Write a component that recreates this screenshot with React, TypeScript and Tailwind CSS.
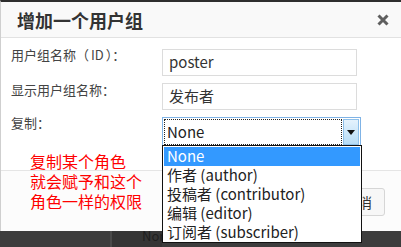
import React from "react";

const cjk = { fontFamily: '"Noto Sans CJK SC", "Noto Sans", sans-serif' };

export default function App() {
  return (
    <div className="relative w-[401px] h-[247px] overflow-hidden bg-[#3d3d3d]" style={cjk}>
      <div className="flex flex-col h-[231px] bg-white border-t-2 border-[#2e2e2e] border-l border-l-[#cfcfcf]">
        <div className="flex items-center justify-between h-[36px] bg-[#f9f9f9] border-b border-[#e2e2e2] pl-[16px] pr-[10px]">
          <span className="text-[18px] font-bold text-[#333] leading-none">增加一个用户组</span>
          <svg width="14" height="14" viewBox="0 0 14 14" className="mr-[1px]">
            <path d="M2.5 2.5 L11.5 11.5 M11.5 2.5 L2.5 11.5" stroke="#5f5f5f" strokeWidth="3" strokeLinecap="butt" />
          </svg>
        </div>
        <div className="flex flex-col gap-[7px] pt-[11px] pl-[10px] h-[132px]">
          <div className="grid grid-cols-[151px_195px] items-start">
            <span className="text-[13px] leading-[14px] text-[#444] -mt-[1px]">
              用户组名称（<span className="px-[2px]">ID</span>）：
            </span>
            <div className="h-[27px] border border-[#dcdcdc] flex items-center pl-[6px] text-[15px] text-[#333]">poster</div>
          </div>
          <div className="grid grid-cols-[151px_195px] items-start">
            <span className="text-[13px] leading-[14px] text-[#444] pt-[0px]">显示用户组名称：</span>
            <div className="h-[27px] border border-[#dcdcdc] flex items-center pl-[6px] text-[15px] text-[#333]">发布者</div>
          </div>
          <div className="grid grid-cols-[151px_199px] items-start">
            <span className="text-[13px] leading-[14px] text-[#444] -mt-[1px]">复制：</span>
            <div className="h-[30px] border border-[#7fb3e6] flex p-[1px] gap-[1px] bg-white">
              <div className="flex-1 border border-dotted border-[#222] flex items-center pl-[2px] text-[15px] text-[#222]">None</div>
              <div className="w-[16px] bg-gradient-to-b from-[#e4f2fd] to-[#b6dcf6] border border-[#8ec0ea] flex items-center justify-center">
                <svg width="8" height="5" viewBox="0 0 8 5"><path d="M0 0 L8 0 L4 5 Z" fill="#111" /></svg>
              </div>
            </div>
          </div>
        </div>
        <div className="flex-1 border-t border-[#e5e5e5] bg-[#fcfcfc] flex justify-end items-start pt-[17px] pr-[16px]">
          <div className="h-[28px] px-[12px] border border-[#d6d6d6] rounded-[3px] bg-[#f7f7f7] flex items-center text-[14px] text-[#333]">取消</div>
        </div>
      </div>
      <div className="absolute left-[110px] top-[231px] w-[52px] h-[16px] bg-[#353535] border-l-2 border-[#4a4a4a] pl-[30px] overflow-hidden whitespace-nowrap text-[13px] text-[#1e1e1e] leading-[10px]">Non</div>

      <div className="absolute left-[30px] top-[151px] flex flex-col text-[16px] leading-[20px] text-[#ff0000]">
        <span className="h-[20px]">复制某个角色</span>
        <span className="h-[20px]">就会赋予和这个</span>
        <span className="h-[20px]">角色一样的权限</span>
      </div>

      <div className="absolute left-[162px] top-[145px] w-[200px] h-[98px] bg-white border border-[#111] pt-[1px] px-[1px] text-[15px] text-[#222]">
        <div className="h-[19px] bg-[#3399ff] text-white flex items-center pl-[3px]">None</div>
        <div className="h-[19px] flex items-center pl-[3px]">作者 (author)</div>
        <div className="h-[19px] flex items-center pl-[3px]">投稿者 (contributor)</div>
        <div className="h-[19px] flex items-center pl-[3px]">编辑 (editor)</div>
        <div className="h-[19px] flex items-center pl-[3px]">订阅者 (subscriber)</div>
      </div>
    </div>
  );
}
